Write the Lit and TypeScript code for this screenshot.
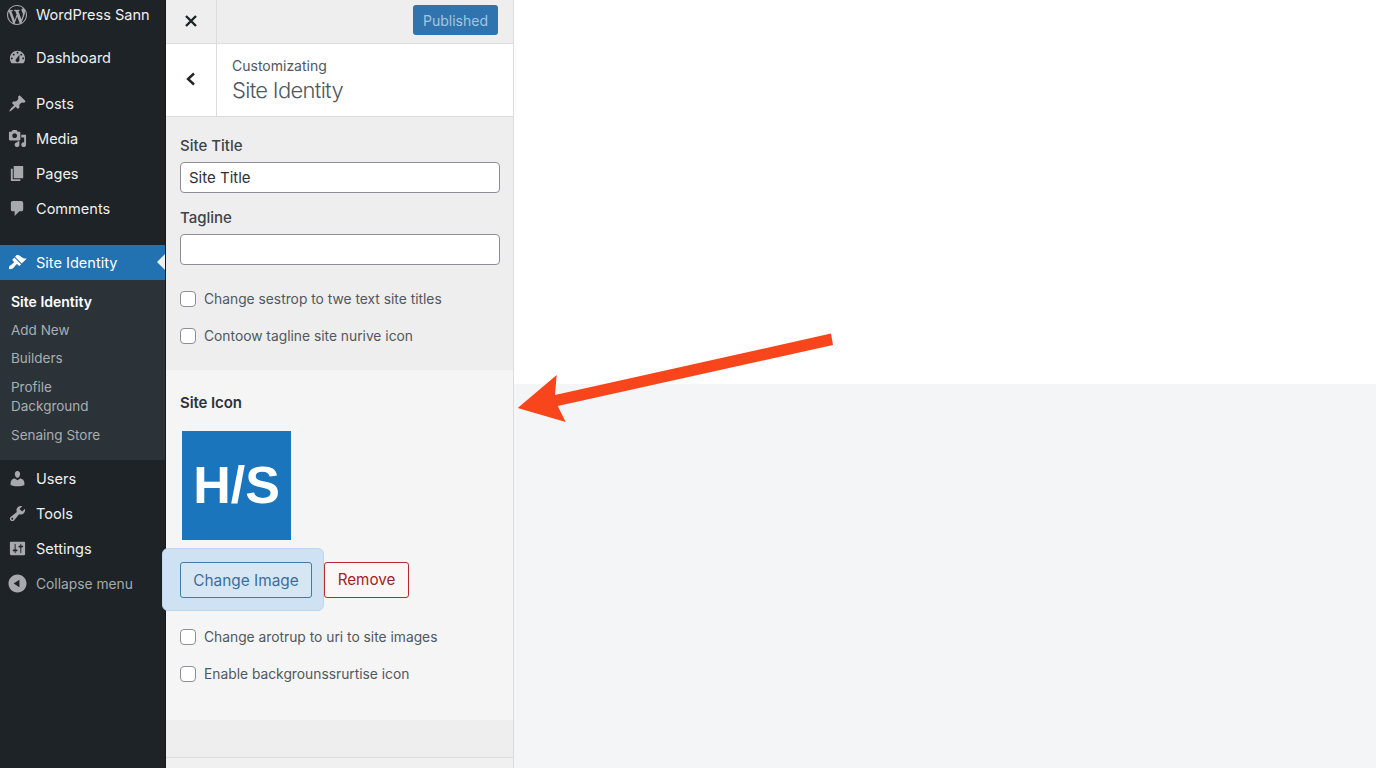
import { LitElement, html, css, svg } from "lit";
import { customElement } from "lit/decorators.js";

const icons: Record<string, string> = {
  wp: "M20 10c0-5.51-4.49-10-10-10C4.48 0 0 4.49 0 10c0 5.52 4.48 10 10 10 5.51 0 10-4.48 10-10zM7.78 15.37L4.37 6.22c.55-.02 1.17-.08 1.17-.08.5-.06.44-1.13-.06-1.11 0 0-1.45.11-2.37.11-.18 0-.37 0-.58-.01C4.12 2.69 6.87 1.11 10 1.11c2.33 0 4.45.87 6.05 2.34-.68-.11-1.65.39-1.65 1.58 0 .74.45 1.36.9 2.1.35.61.55 1.36.55 2.46 0 1.49-1.4 5-1.4 5l-3.03-8.37c.54-.02.82-.17.82-.17.5-.05.44-1.25-.06-1.22 0 0-1.44.12-2.38.12-.87 0-2.33-.12-2.33-.12-.5-.03-.56 1.2-.06 1.22l.92.08 1.26 3.41zM17.41 10c.24-.64.74-1.87.43-4.25.7 1.29 1.05 2.71 1.05 4.25 0 3.29-1.73 6.24-4.4 7.78.97-2.59 1.94-5.2 2.92-7.78zM6.1 18.09C3.12 16.65 1.11 13.53 1.11 10c0-1.3.23-2.48.72-3.59C3.25 10.3 4.67 14.2 6.1 18.09zm4.03-6.63l2.58 6.98c-.86.29-1.76.45-2.71.45-.79 0-1.57-.11-2.29-.33.81-2.38 1.62-4.74 2.42-7.1z",
  dashboard: "M3.76 16h12.48c1.1-1.37 1.76-3.11 1.76-5 0-4.42-3.58-8-8-8s-8 3.58-8 8c0 1.89.66 3.63 1.76 5zM10 4c.55 0 1 .45 1 1s-.45 1-1 1-1-.45-1-1 .45-1 1-1zM6 6c.55 0 1 .45 1 1s-.45 1-1 1-1-.45-1-1 .45-1 1-1zm8 0c.55 0 1 .45 1 1s-.45 1-1 1-1-.45-1-1 .45-1 1-1zm-5.37 5.55L12 7v6c0 1.1-.9 2-2 2s-2-.9-2-2c0-.57.24-1.08.63-1.45zM4 10c.55 0 1 .45 1 1s-.45 1-1 1-1-.45-1-1 .45-1 1-1zm12 0c.55 0 1 .45 1 1s-.45 1-1 1-1-.45-1-1 .45-1 1-1z",
  posts: "M10.44 3.02l1.82-1.82 6.36 6.35-1.83 1.82c-1.05-.68-2.48-.57-3.41.36l-.75.75c-.92.93-1.04 2.36-.35 3.41l-1.83 1.82-2.41-2.41-2.8 2.79c-.42.42-3.38 2.71-3.8 2.29s1.86-3.39 2.28-3.81l2.79-2.79L4.1 9.36l1.83-1.82c1.05.69 2.48.57 3.41-.36l.75-.75c.93-.92 1.05-2.35.35-3.41z",
  media: "M13 11V4c0-.55-.45-1-1-1h-1.67L9 1H5L3.67 3H2c-.55 0-1 .45-1 1v7c0 .55.45 1 1 1h10c.55 0 1-.45 1-1zM7 4.5c1.38 0 2.5 1.12 2.5 2.5S8.38 9.5 7 9.5 4.5 8.38 4.5 7 5.62 4.5 7 4.5zM14 6h5v10.5c0 1.38-1.12 2.5-2.5 2.5S14 17.88 14 16.5s1.12-2.5 2.5-2.5c.17 0 .34.02.5.05V9h-3V6zm-4 8.05V13h2v3.5c0 1.38-1.12 2.5-2.5 2.5S7 17.88 7 16.5 8.12 14 9.5 14c.17 0 .34.02.5.05z",
  pages: "M6 15V2h10v13H6zm-1 1h8v2H3V5h2v11z",
  comments: "M5 2h9c1.1 0 2 .9 2 2v7c0 1.1-.9 2-2 2h-2l-5 5v-5H5c-1.1 0-2-.9-2-2V4c0-1.1.9-2 2-2z",
  brush: "M14.48 11.06L7.41 3.99l1.5-1.5c.5-.56 2.3-.47 3.51.32 1.21.8 1.43 1.28 2.91 2.1 1.18.64 2.45 1.26 4.45.85zm-.71.71L6.7 4.7 4.93 6.47c-.39.39-.39 1.02 0 1.41l1.06 1.06c.39.39.39 1.03 0 1.42-.6.6-1.43 1.11-2.21 1.69-.35.26-.7.53-1.01.84C1.43 13.23.5 15.8 1.22 16.78c.98.72 3.55-.21 4.88-1.55.31-.31.58-.66.84-1.01.58-.78 1.09-1.61 1.69-2.21.39-.39 1.03-.39 1.42 0l1.06 1.06c.39.39 1.02.39 1.41 0z",
  users: "M10 9.25c-2.27 0-2.73-3.44-2.73-3.44C7 4.02 7.82 2 9.97 2c2.16 0 2.98 2.02 2.71 3.81 0 0-.41 3.44-2.68 3.44zm0 2.57L12.72 10c2.39 0 4.52 2.33 4.52 4.53v2.49s-3.65 1.13-7.24 1.13c-3.65 0-7.24-1.13-7.24-1.13v-2.49c0-2.25 1.94-4.48 4.47-4.48z",
  tools: "M16.68 9.77c-1.34 1.34-3.3 1.67-4.95.99l-5.41 6.52c-.99.99-2.59.99-3.58 0s-.99-2.59 0-3.57l6.52-5.42c-.68-1.65-.35-3.61.99-4.95 1.28-1.28 3.12-1.62 4.72-1.06l-2.89 2.89 2.82 2.82 2.86-2.87c.53 1.58.18 3.39-1.08 4.65zM3.81 16.21c.4.39 1.04.39 1.43 0 .4-.4.4-1.04 0-1.43-.39-.4-1.03-.4-1.43 0-.39.39-.39 1.03 0 1.43z",
  settings: "M18 16V4c0-.55-.45-1-1-1H3c-.55 0-1 .45-1 1v12c0 .55.45 1 1 1h14c.55 0 1-.45 1-1zM8 11h1c.55 0 1 .45 1 1s-.45 1-1 1H8v1.5c0 .28-.22.5-.5.5s-.5-.22-.5-.5V13H6c-.55 0-1-.45-1-1s.45-1 1-1h1V5.5c0-.28.22-.5.5-.5s.5.22.5.5V11zm5-2h-1c-.55 0-1-.45-1-1s.45-1 1-1h1V5.5c0-.28.22-.5.5-.5s.5.22.5.5V7h1c.55 0 1 .45 1 1s-.45 1-1 1h-1v5.5c0 .28-.22.5-.5.5s-.5-.22-.5-.5V9z",
  collapse: "M10 .5c5.25 0 9.5 4.25 9.5 9.5s-4.25 9.5-9.5 9.5S.5 15.25.5 10 4.75.5 10 .5zM12 14V6l-6 4z",
};

const icon = (name: string) =>
  html`<svg class="ico" viewBox="0 0 20 20" aria-hidden="true">${svg`<path d=${icons[name]}></path>`}</svg>`;

@customElement("app-root")
export class AppRoot extends LitElement {
  static styles = css`
    :host { display: block; width: 1376px; height: 768px; overflow: hidden; position: relative;
      font-family: Inter, "Liberation Sans", sans-serif; -webkit-font-smoothing: antialiased; }
    .page { display: flex; height: 768px; }
    .side { width: 165px; flex: none; background: #1d2327; border-right: 1px solid #15191c; color: #f0f0f0; font-size: 14.55px; }
    .item { display: flex; align-items: center; height: 35px; padding-left: 8px; gap: 9px; position: relative; }
    .item .ico { width: 19px; height: 19px; fill: #a7aaad; flex: none; }
    .logo { height: 30px; margin-bottom: 10px; padding-left: 7px; }
    .logo .ico { width: 20px; height: 20px; margin-top: -1px; }
    .dash { margin-bottom: 11px; }
    .active { background: #2271b1; color: #fff; margin-top: 19px; height: 35px; }
    .active .ico { fill: #fff; }
    .active::after { content: ""; position: absolute; right: 0; top: 9px; border: 8px solid transparent; border-right-color: #f0f0f0; border-left-width: 0; }
    .sub { background: #2c3338; height: 180px; padding: 7.75px 0 0 11px; box-sizing: border-box; font-size: 13.5px; color: #a9aeb3; margin-bottom: 1px; }
    .sub div { line-height: 19.5px; padding: 4.5px 0; }
    .sub .cur { color: #fff; font-weight: 600; font-size: 14px; }
    .collapse { color: #a7aaad; font-size: 13.8px; }

    .panel { width: 347px; flex: none; border-right: 1px solid #dcdcde; background: #eeeeee; display: flex; flex-direction: column; color: #3c434a; position: relative; z-index: 1; }
    .top { display: flex; height: 43px; border-bottom: 1px solid #dcdcde; flex: none; }
    .cell { width: 50px; height: 100%; border-right: 1px solid #dcdcde; display: flex; align-items: center; justify-content: center; flex: none; }
    .cell svg { width: 16px; height: 16px; stroke: #1d2327; stroke-width: 2.4; fill: none; margin-top: -2px; }
    .publish { margin: 5px 15px 0 auto; width: 85px; height: 30px; border-radius: 3px; background: #2f74ae; border: 0; color: #a4c6e2; font: inherit; font-size: 14px; padding: 0; }
    .head { display: flex; height: 72px; background: #fff; border-bottom: 1px solid #dcdcde; flex: none; }
    .crumb { padding: 13px 0 0 15px; }
    .crumb small { display: block; font-size: 14px; line-height: 17px; color: #50575e; }
    .crumb strong { display: block; font-size: 22px; line-height: 30px; font-weight: 300; margin-top: 1px; color: #50575e; letter-spacing: -0.7px; }
    .sec1 { height: 253px; box-sizing: border-box; padding: 19px 13px 0 14px; flex: none; }
    .lab { font-size: 15px; font-weight: 500; line-height: 20px; color: #3c434a; }
    .field { display: block; box-sizing: border-box; width: 320px; height: 31px; margin-top: 6px; border: 1px solid #8c8f94; border-radius: 4px; background: #fff; padding: 0 8px; font: inherit; font-size: 15px; color: #2c3338; }
    .gap { margin-top: 15px; }
    .check { display: flex; align-items: center; gap: 8px; height: 20px; font-size: 13.8px; color: #50575e; margin-top: 17px; }
    .first-check { margin-top: 24px; }
    .box { width: 16px; height: 16px; box-sizing: border-box; border: 1px solid #8c8f94; border-radius: 4px; background: #fff; flex: none; }
    .sec2 { height: 350px; box-sizing: border-box; padding: 23px 13px 0 14px; background: #f5f5f5; flex: none; }
    .sec2 .lab { font-size: 15px; font-weight: 600; color: #2c3338; letter-spacing: -0.1px; }
    .thumb { width: 109px; height: 109px; margin: 18px 0 0 2px; padding-bottom: 2px; box-sizing: border-box; background: #1b75bc; color: #fff; font-family: "Liberation Sans", sans-serif; font-weight: 700; font-size: 52px; display: flex; align-items: center; justify-content: center; }
    .btns { display: flex; align-items: center; margin-top: 8px; }
    .halo { margin-left: -18px; padding: 13px 11px 12px 17px; background: #cfe2f4; border: 1px solid #bcd8f1; border-radius: 6px; box-sizing: border-box; width: 162px; height: 63px; }
    .change { display: block; width: 132px; height: 36px; box-sizing: border-box; border: 1px solid #3e7cab; border-radius: 3px; background: #d7e6f3; color: #3a6f9c; font: inherit; font-size: 15.4px; padding: 0; }
    .remove { width: 85px; height: 36px; box-sizing: border-box; border: 1px solid #b32d2e; border-radius: 3px; background: #fbf7f7; color: #a02325; font: inherit; font-size: 15.2px; padding: 0; }
    .sec2 .first-check { margin-top: 16px; }
    .foot { height: 37px; border-bottom: 1px solid #dcdcde; flex: none; }
    .rest { flex: 1; background: #f0f0f0; }

    .preview { flex: 1; display: flex; flex-direction: column; }
    .preview .w { height: 384px; background: #fff; }
    .preview .g { flex: 1; background: #f3f5f6; }
    .arrow { position: absolute; left: 510px; top: 325px; z-index: 2; }
  `;

  render() {
    return html`
      <div class="page">
        <nav class="side">
          <div class="item logo">${icon("wp")}<span>WordPress Sann</span></div>
          <div class="item dash">${icon("dashboard")}<span>Dashboard</span></div>
          <div class="item">${icon("posts")}<span>Posts</span></div>
          <div class="item">${icon("media")}<span>Media</span></div>
          <div class="item">${icon("pages")}<span>Pages</span></div>
          <div class="item">${icon("comments")}<span>Comments</span></div>
          <div class="item active">${icon("brush")}<span>Site Identity</span></div>
          <div class="sub">
            <div class="cur">Site Identity</div>
            <div>Add New</div>
            <div>Builders</div>
            <div>Profile<br />Dackground</div>
            <div>Senaing Store</div>
          </div>
          <div class="item">${icon("users")}<span>Users</span></div>
          <div class="item">${icon("tools")}<span>Tools</span></div>
          <div class="item">${icon("settings")}<span>Settings</span></div>
          <div class="item collapse">${icon("collapse")}<span>Collapse menu</span></div>
        </nav>
        <section class="panel">
          <div class="top">
            <div class="cell"><svg viewBox="0 0 16 16"><path d="M3 3l10 10M13 3L3 13"></path></svg></div>
            <button class="publish">Published</button>
          </div>
          <div class="head">
            <div class="cell"><svg viewBox="0 0 16 16"><path d="M11 2.5L5 8l6 5.5"></path></svg></div>
            <div class="crumb"><small>Customizating</small><strong>Site Identity</strong></div>
          </div>
          <div class="sec1">
            <div class="lab">Site Title</div>
            <input class="field" value="Site Title" />
            <div class="lab gap">Tagline</div>
            <input class="field" />
            <div class="check first-check"><span class="box"></span>Change sestrop to twe text site titles</div>
            <div class="check"><span class="box"></span>Contoow tagline site nurive icon</div>
          </div>
          <div class="sec2">
            <div class="lab">Site Icon</div>
            <div class="thumb">H/S</div>
            <div class="btns">
              <div class="halo"><button class="change">Change Image</button></div>
              <button class="remove">Remove</button>
            </div>
            <div class="check first-check"><span class="box"></span>Change arotrup to uri to site images</div>
            <div class="check"><span class="box"></span>Enable backgrounssrurtise icon</div>
          </div>
          <div class="foot"></div>
          <div class="rest"></div>
        </section>
        <div class="preview"><div class="w"></div><div class="g"></div></div>
      </div>
      <svg class="arrow" width="330" height="105" viewBox="510 325 330 105">
        <polygon fill="#f9451b" points="831,333.5 833,345 557.7,406 565.7,422 517.7,408 556.7,375 555,395"></polygon>
      </svg>
    `;
  }
}
